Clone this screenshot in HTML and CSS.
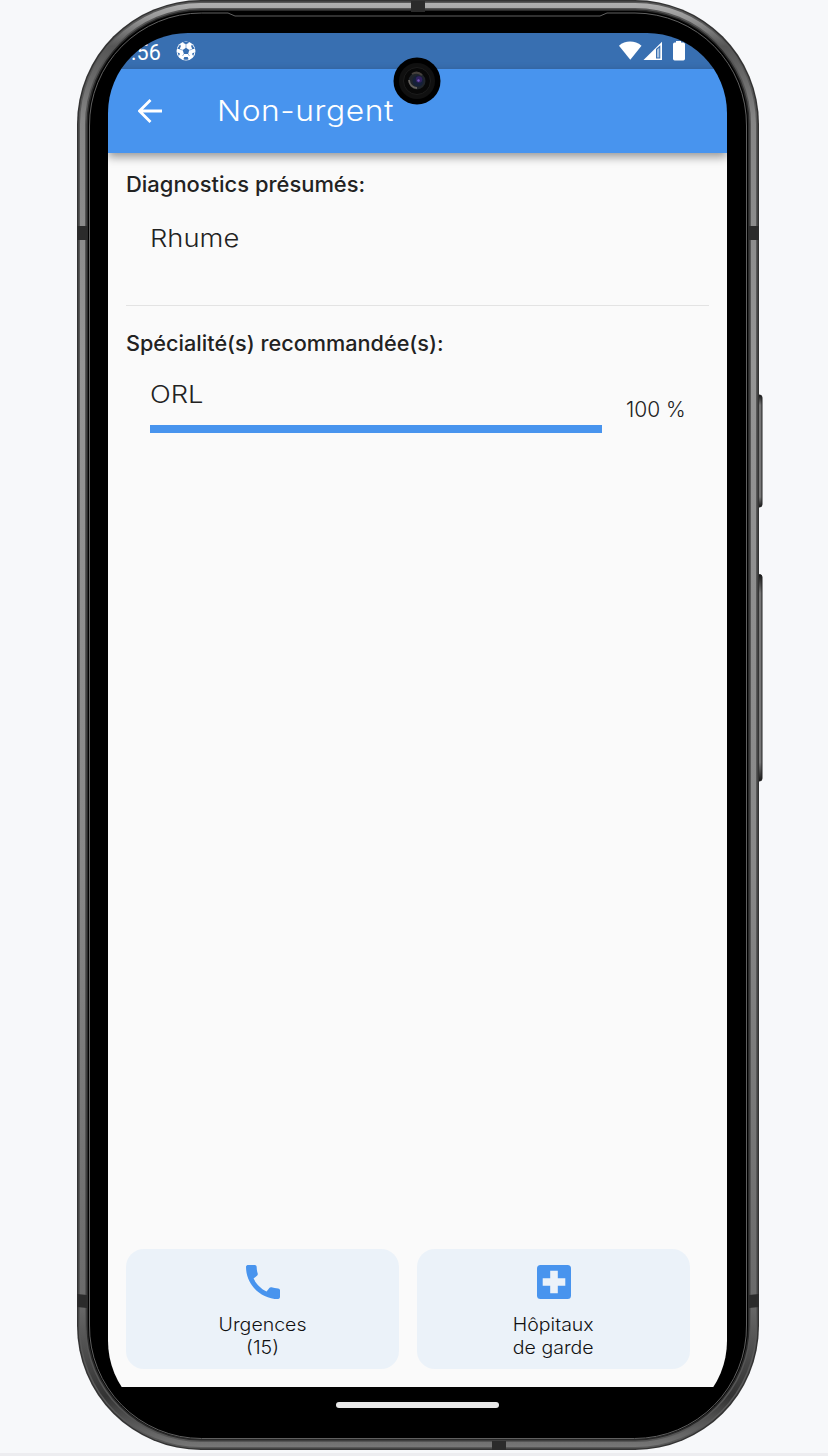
FILE: index.html
```html
<!DOCTYPE html>
<html lang="fr">
<head>
<meta charset="utf-8">
<title>Non-urgent</title>
<link rel="stylesheet" href="styles.css">
</head>
<body>
<main class="phone">
  <svg class="frame" width="688" height="1456" viewBox="0 0 688 1456" fill="none" aria-hidden="true">
    <defs>
      <linearGradient id="key" x1="0" y1="0" x2="0" y2="1"><stop offset="0" stop-color="#161616"/><stop offset=".09" stop-color="#777"/><stop offset=".91" stop-color="#777"/><stop offset="1" stop-color="#161616"/></linearGradient>
      <linearGradient id="metal" x1="0" y1="0" x2="0" y2="1"><stop offset="0" stop-color="#b0b0b0"/><stop offset=".01" stop-color="#999"/><stop offset=".03" stop-color="#555"/><stop offset=".08" stop-color="#858585"/><stop offset=".25" stop-color="#959595"/><stop offset=".6" stop-color="#888"/><stop offset=".9" stop-color="#6a6a6a"/><stop offset=".965" stop-color="#333"/><stop offset="1" stop-color="#777"/></linearGradient>
    </defs>
    <rect x="679.5" y="395" width="5.500" height="112" rx="2.500" fill="url(#key)" stroke="#222"/>
    <rect x="679.5" y="574.500" width="5.500" height="206.500" rx="2.500" fill="url(#key)" stroke="#222"/>
    <rect x="0" y="0" width="682" height="1450" rx="124" fill="#333"/>
    <rect x="1.500" y="1.500" width="679" height="1447" rx="122.500" fill="#585858"/>
    <rect x="3" y="3" width="676" height="1444" rx="121" fill="url(#metal)"/>
    <rect x="8" y="8" width="666" height="1434" rx="116" fill="#555"/>
    <rect x="9.500" y="9.500" width="663" height="1431" rx="114.500" fill="#292929"/>
    <rect x="11" y="11" width="660" height="1428" rx="113" fill="#000"/>
    <path d="M12.500 126A112 112 0 0 1 124.500 13H151l7 3H523l7-3h28A112 112 0 0 1 669.500 126V1325A112 112 0 0 1 557.500 1438.500H124.500A112 112 0 0 1 12.500 1325Z" stroke="#606060"/>
    <path d="M0 226h10v14H0zM672 226h10v14h-10zM334 1h14v11h-14zM0 1294l10 1v13l-10-1zM672 1295l10-1v13l-10 1zM415 1441h14v9h-14z" fill="#2b2b2b"/>
  </svg>
  <div class="screen">
    <div class="status">
      <span class="clock">:56</span>
      <svg class="ball" width="20" height="20" viewBox="0 0 20 20" aria-hidden="true"><circle cx="10" cy="10" r="9.500" fill="#fff"/><path d="M10 6.700l3.300 2.400-1.200 3.800H7.900L6.700 9.100zM6.800 1.800l3.200 1.500 3.200-1.500-1.300-.8H8.100zM1.300 7.800l2.400.4L4.900 5 4 3.500zM18.700 7.800l-2.400.4L15.100 5l.9-1.500zM2.800 15l1.300-2.200-2.600-1.600zM17.200 15l-1.300-2.200 2.600-1.600zM7.400 18.300L8.300 16h3.400l.9 2.300-1.300.5H8.700z" fill="#386fb1"/><path d="M10 3v4M6.700 9.100l-3-.9M13.300 9.100l3-.9M7.900 12.900L6.500 15M12.100 12.900L13.500 15" stroke="#386fb1" stroke-width=".5"/></svg>
      <svg class="signals" width="68" height="20" viewBox="0 0 68 20" aria-hidden="true"><path d="M0 4.800C6-.8 16-.8 22.500 4.800L11.300 18.800z" fill="#fff"/><path d="M43 .8V19H24.500z" fill="#fff"/><path d="M37 17.500V8L41.300 4.200v13.300z" fill="#386fb1"/><path d="M38 8.500l2.300-1.800v9.800H38z" fill="#a9c2df"/><path d="M57 0h5v1.500h2.300q1.700 0 1.700 1.700v14.600q0 1.700-1.700 1.700h-8.600q-1.700 0-1.700-1.700V3.200q0-1.700 1.700-1.700H57z" fill="#fff"/></svg>
    </div>
    <header class="appbar">
      <svg width="24" height="24" viewBox="0 0 24 24" aria-hidden="true"><path d="M24 12H2M12.500 1L1.500 12l11 11" fill="none" stroke="#fff" stroke-width="2.800"/></svg>
      <h1 class="title">Non-urgent</h1>
    </header>
    <section class="content">
      <h2 class="heading diag">Diagnostics présumés:</h2>
      <p class="item cold">Rhume</p>
      <hr class="rule">
      <h2 class="heading spec">Spécialité(s) recommandée(s):</h2>
      <div class="score">
        <div class="meter"><p class="item orl">ORL</p><div class="bar"></div></div>
        <span class="percent">100 %</span>
      </div>
    </section>
    <nav class="actions">
      <a class="card">
        <svg width="34" height="34" viewBox="3 3 18 18" aria-hidden="true"><path fill="#4894ee" d="M20.010 15.380c-1.230 0-2.420-.2-3.530-.56-.35-.12-.74-.03-1.010.24l-1.570 1.970c-2.830-1.350-5.480-3.900-6.890-6.830l1.950-1.660c.27-.28.35-.67.24-1.020-.37-1.110-.56-2.300-.56-3.530 0-.54-.45-.99-.99-.99H4.190C3.650 3 3 3.240 3 3.990 3 13.280 10.730 21 20.010 21c.71 0 .99-.63.99-1.180v-3.450c0-.54-.45-.99-.99-.99z"/></svg>
        <span class="label">Urgences<br>(15)</span>
      </a>
      <a class="card">
        <svg width="34" height="34" viewBox="0 0 34 34" aria-hidden="true"><rect width="34" height="34" rx="3.500" fill="#4894ee"/><path fill="#ebf2f9" d="M13.200 5.700h7.600v7.500h7.500v7.600h-7.500v7.500h-7.600v-7.500H5.700v-7.600h7.500z"/></svg>
        <span class="label">Hôpitaux<br>de garde</span>
      </a>
    </nav>
    <footer class="navbar"><div class="pill"></div></footer>
  </div>
  <svg class="camera" width="48" height="48" viewBox="0 0 48 48" aria-hidden="true"><circle cx="24" cy="24" r="23.500" fill="#000"/><circle cx="24" cy="24" r="18" fill="#101010"/><circle cx="24" cy="24" r="13.500" fill="#080808" stroke="#1c1c1c"/><circle cx="24" cy="24" r="8.500" fill="#20252b"/><path d="M16 23a8.200 8.200 0 0 0 8 8" fill="none" stroke="#66635f" stroke-width="1.800"/><path d="M19 17a8.500 8.500 0 0 1 10 1" fill="none" stroke="#44403c" stroke-width="2"/><circle cx="25" cy="24" r="5.500" fill="#152039"/><circle cx="26" cy="22.500" r="3.200" fill="#30205f"/><circle cx="25.500" cy="23.500" r="1.200" fill="#7656bc"/></svg>
</main>
</body>
</html>
```

FILE: styles.css
```css
* { box-sizing: border-box; }
body { margin: 0; height: 1456px; overflow: hidden; background: #f7f8fa; font-family: Inter, "Open Sans", sans-serif; font-weight: 300; color: #222; border-bottom: 3px solid #ededf0; }
h1, h2, p { margin: 0; font-weight: 300; white-space: nowrap; }
.phone { position: relative; width: 682px; height: 1450px; margin-left: 77px; padding: 33px 32px 25px 31px; }
.frame { position: absolute; left: 0; top: 0; }
.screen { position: relative; display: flex; flex-direction: column; height: 1392px; border-radius: 80px 80px 84px 84px; overflow: hidden; }
.status { height: 36px; flex: none; background: #386fb1; display: flex; padding: 8px 40px 0 23px; color: #fff; }
.clock { width: 45px; font: 400 21.500px/23px Roboto, sans-serif; letter-spacing: .2px; }
.signals { margin-left: auto; }
.appbar { position: relative; height: 84px; flex: none; background: #4894ee; color: #fff; display: flex; align-items: center; padding-left: 30px; gap: 55px; box-shadow: 0 4px 9px rgba(0,0,0,.4); }
.title { font-size: 28.500px; line-height: 40px; letter-spacing: .5px; transform: scaleX(1.115); transform-origin: left; }
.content { padding: 16px 18px 0; display: flex; flex-direction: column; flex: 1; background: #fafafa; }
.heading { font-size: 21px; line-height: 32px; font-weight: 500; transform-origin: left; }
.diag { transform: scaleX(1.044); }
.item { font-size: 24px; line-height: 32px; transform: scaleX(1.14); transform-origin: left; }
.cold { margin: 22px 0 50px 24px; }
.rule { width: 100%; height: 1px; margin: 0; border: 0; background: #e3e3e3; }
.spec { margin-top: 22px; transform: scaleX(1.031); }
.score { display: flex; align-items: center; gap: 24px; margin: 19px 24px 0; }
.meter { width: 452px; flex: none; }
.bar { height: 8px; margin-top: 14px; background: #4894ee; }
.percent { font-size: 21px; line-height: 26px; margin-top: 8px; white-space: nowrap; }
.actions { display: grid; grid-template-columns: 273px 273px; gap: 19px; padding: 0 18px 18px; background: #fafafa; }
.card { height: 120px; border-radius: 18px; background: #ebf2f9; display: flex; flex-direction: column; align-items: center; padding-top: 16px; gap: 15px; }
.card + .card { margin-left: -1px; margin-right: 1px; }
.label { text-align: center; font-size: 18px; line-height: 22.500px; color: #111; transform: scaleX(1.085); }
.navbar { height: 38px; flex: none; background: #000; padding-top: 15px; }
.pill { width: 163px; height: 6px; border-radius: 3px; background: #e9e9e9; margin-left: 228px; }
.camera { position: absolute; left: 316px; top: 57px; }
```
